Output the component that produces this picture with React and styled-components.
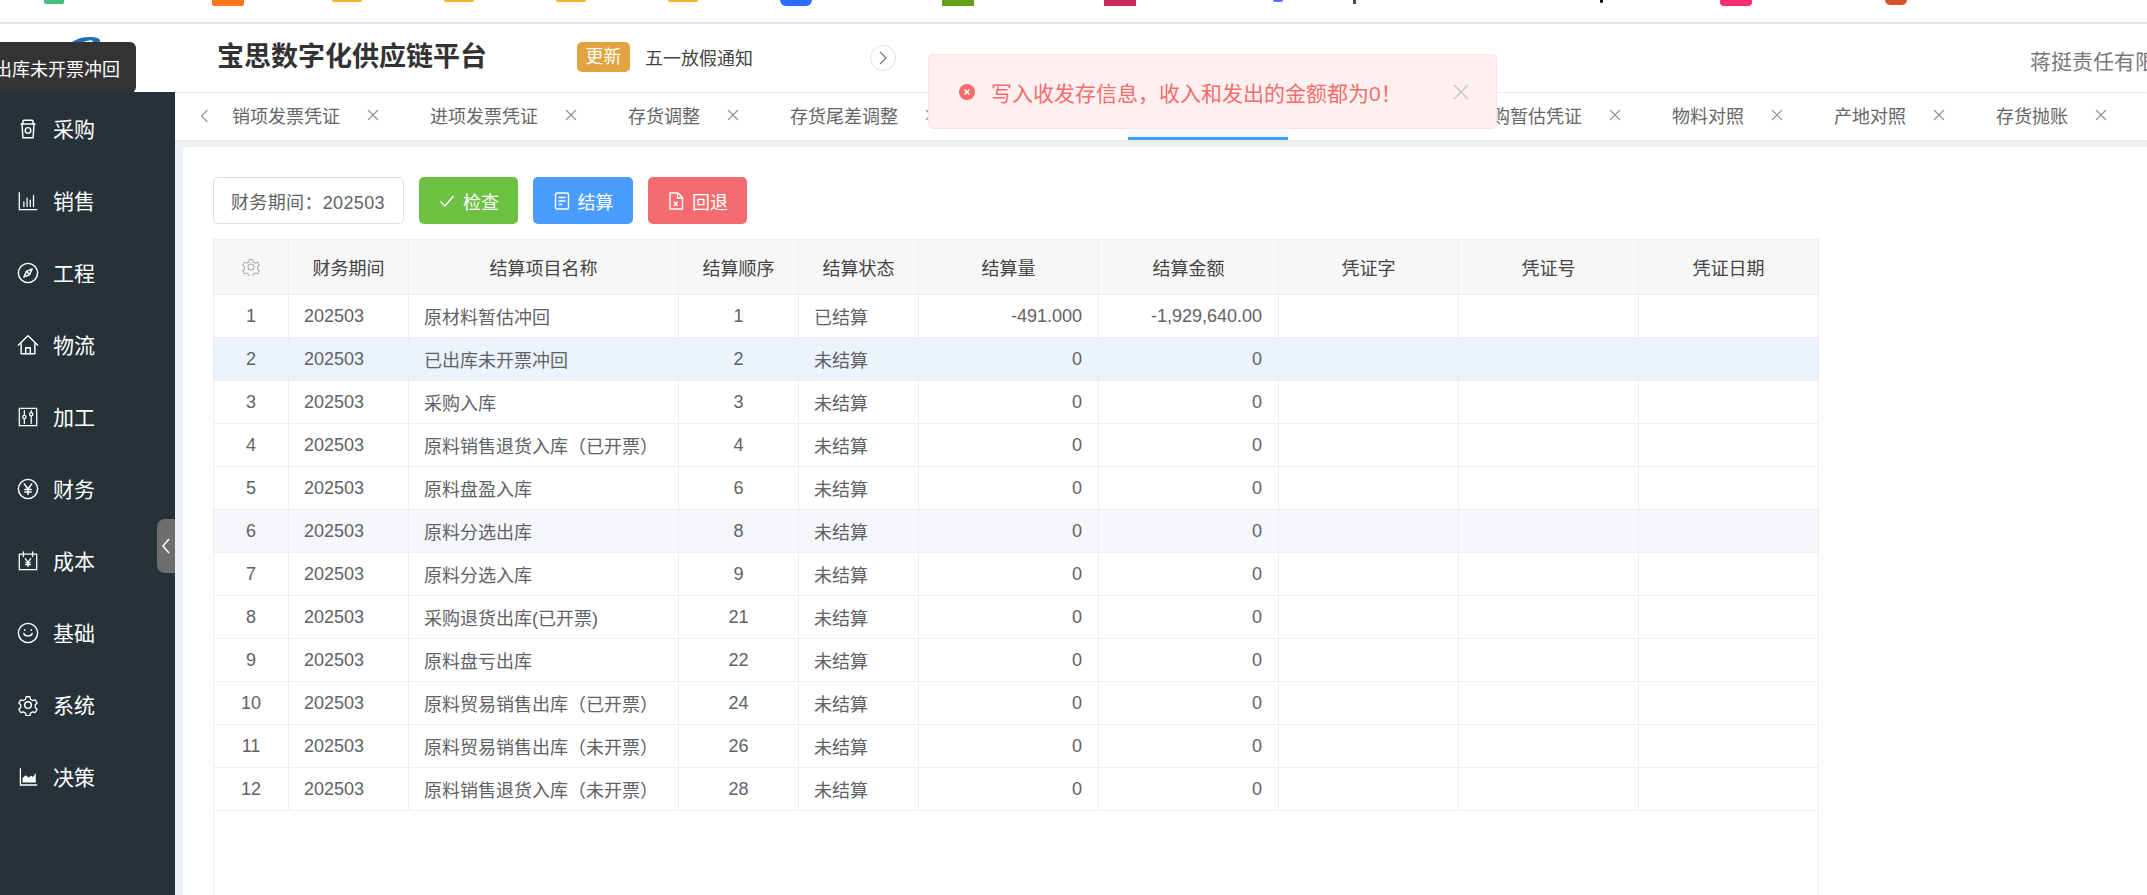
import React from 'react';
import styled, { createGlobalStyle } from 'styled-components';

const Global = createGlobalStyle`
  html, body { margin: 0; padding: 0; height: 100%; overflow: hidden; background: #fff; }
  #root { height: 100%; }
  * { box-sizing: border-box; }
  body { font-family: "Liberation Sans", "Noto Sans CJK SC", sans-serif; color: #606266; }
`;

const Page = styled.div`
  position: relative;
  width: 2147px;
  height: 895px;
  display: flex;
  flex-direction: column;
  overflow: hidden;
`;

/* browser bookmark bar, cropped at the top of the capture */
const BookmarkBar = styled.div`
  flex: 0 0 24px;
  display: flex;
  padding-left: 44px;
  background: #fff;
  border-bottom: 2px solid #e4e4e4;
  overflow: hidden;
`;
const Bookmark = styled.div`
  flex: 0 0 ${p => p.$w}px;
  display: flex;
  align-items: flex-start;
  gap: 11px;
  height: 22px;
  overflow: hidden;
`;
const BookmarkIcon = styled.span`
  flex: 0 0 ${p => p.$w}px;
  height: ${p => p.$h}px;
  background: ${p => p.$c};
  border-radius: 0 0 ${p => p.$r}px ${p => p.$r}px;
`;
const BookmarkLabel = styled.span`
  font-size: 18px;
  line-height: 18px;
  margin-top: -17px;
  color: #555;
  white-space: nowrap;
`;

const Header = styled.header`
  flex: 0 0 68px;
  display: flex;
  align-items: center;
  background: #fff;
  overflow: hidden;
`;
const LogoBox = styled.div`
  flex: 0 0 217px;
  align-self: stretch;
  padding: 9px 0 0 67px;
`;
const Title = styled.h1`
  margin: 0 0 2px;
  font-size: 27px;
  line-height: 34px;
  font-weight: 700;
  color: #333;
  white-space: nowrap;
`;
const Badge = styled.span`
  flex: 0 0 53px;
  height: 30px;
  margin: -2px 0 0 90px;
  border-radius: 5px;
  background: #e2a341;
  color: #fff;
  font-size: 18px;
  line-height: 30px;
  text-align: center;
`;
const Notice = styled.span`
  margin: -2px 0 0 15px;
  font-size: 18px;
  color: #444;
  white-space: nowrap;
`;
const RoundButton = styled.span`
  flex: 0 0 26px;
  height: 26px;
  margin-left: 117px;
  display: flex;
  align-items: center;
  justify-content: center;
  border: 1px solid #dcdfe6;
  border-radius: 50%;
  color: #777;
`;
const Company = styled.span`
  flex: 0 0 auto;
  margin: 4px 0 0 1134px;
  font-size: 21px;
  color: #777;
  white-space: nowrap;
`;

const Tooltip = styled.div`
  position: absolute;
  left: -40px;
  top: 42px;
  width: 176px;
  height: 51px;
  padding: 0 16px;
  display: flex;
  align-items: center;
  border-radius: 6px;
  background: #333;
  color: #fff;
  font-size: 18px;
  white-space: nowrap;
  z-index: 5;
`;

const Body = styled.div`
  flex: 1;
  display: flex;
  min-height: 0;
`;
const Sidebar = styled.aside`
  position: relative;
  flex: 0 0 175px;
  background: #263238;
`;
const MenuItem = styled.div`
  height: 72px;
  display: flex;
  align-items: center;
  padding-left: 17px;
  color: #fff;
  font-size: 21px;
`;
const MenuIcon = styled.span`
  flex: 0 0 22px;
  height: 22px;
  margin: 1px 14px 0 0;
  display: flex;
  align-items: center;
  justify-content: center;
`;
const CollapseHandle = styled.div`
  position: absolute;
  right: 0;
  top: 427px;
  width: 18px;
  height: 54px;
  display: flex;
  align-items: center;
  justify-content: center;
  border-radius: 8px 0 0 8px;
  background: #6e6e6e;
  color: #fff;
`;

const Main = styled.main`
  flex: 1;
  min-width: 0;
  display: flex;
  flex-direction: column;
  background: #eff2f5;
`;
const TabBar = styled.nav`
  flex: 0 0 48px;
  display: flex;
  border-top: 1px solid #eeeeee;
  background: #fff;
  box-shadow: 0 1px 4px rgba(0, 21, 41, 0.06);
  overflow: hidden;
`;
const TabArrow = styled.span`
  flex: 0 0 35px;
  padding: 0 0 2px 25px;
  display: flex;
  align-items: center;
  color: #999;
`;
const Tab = styled.div`
  flex: 0 0 auto;
  height: 47px;
  margin-right: 2px;
  padding-left: 22px;
  display: flex;
  align-items: center;
  font-size: 18px;
  color: #666;
  white-space: nowrap;
  background: ${p => (p.$active ? '#f4f8fe' : 'transparent')};
  border-bottom: 3px solid ${p => (p.$active ? '#409eff' : 'transparent')};
`;
const TabClose = styled.span`
  flex: 0 0 66px;
  display: flex;
  justify-content: center;
  color: #909399;
`;

const Panel = styled.section`
  flex: 1;
  min-height: 0;
  margin: 7px 0 0 8px;
  padding: 30px 0 0 30px;
  display: flex;
  flex-direction: column;
  background: #fff;
  border-radius: 4px 0 0 0;
  overflow: hidden;
`;
const Toolbar = styled.div`
  flex: 0 0 47px;
  display: flex;
  gap: 15px;
  margin-bottom: 15px;
`;
const PeriodBox = styled.div`
  flex: 0 0 191px;
  display: flex;
  align-items: center;
  padding-left: 17px;
  border: 1px solid #dcdfe6;
  border-radius: 5px;
  font-size: 18px;
  letter-spacing: 0.35px;
  color: #606266;
  white-space: nowrap;
`;
const ActionButton = styled.button`
  flex: 0 0 ${p => p.$w}px;
  display: flex;
  align-items: center;
  justify-content: center;
  gap: 8px;
  padding: 0 0 0 1px;
  border: 0;
  border-radius: 5px;
  background: ${p => p.$bg};
  color: #fff;
  font: inherit;
  font-size: 18px;
`;

const Table = styled.div`
  flex: 1;
  min-height: 0;
  width: 1606px;
  border: 1px solid #ebeef5;
  border-bottom: 0;
  font-size: 18px;
`;
const columns = '120px 270px 120px 120px 180px 180px 180px 180px 179px';
const HeadRow = styled.div`
  display: grid;
  grid-template-columns: 75px ${columns};
  height: 55px;
  background: #f7f7f7;
  border-bottom: 1px solid #ebeef5;
  color: #444;
`;
const HeadCell = styled.div`
  display: flex;
  align-items: center;
  justify-content: center;
  border-right: 1px solid #ebeef5;
  &:last-child { border-right: 0; }
`;
const GearWrap = styled.span`
  display: flex;
  color: #aaa;
`;
const TableBody = styled.div`
  display: flex;
`;
const FixedColumn = styled.div`
  flex: 0 0 75px;
  padding-top: 1px;
`;
const Rows = styled.div`
  flex: 1;
`;
const Row = styled.div`
  display: grid;
  grid-template-columns: ${columns};
  height: 43px;
  background: ${p => p.$bg};
`;
const IndexCell = styled.div`
  height: 43px;
  display: flex;
  align-items: center;
  justify-content: center;
  margin-top: ${p => (p.$first ? '-1px' : '0')};
  background: ${p => p.$bg};
  border-right: 1px solid #ebeef5;
  border-bottom: 1px solid #ebeef5;
`;
const Cell = styled.div`
  display: flex;
  align-items: center;
  justify-content: ${p => (p.$align === 'right' ? 'flex-end' : p.$align === 'center' ? 'center' : 'flex-start')};
  padding: 0 ${p => (p.$align === 'right' ? 16 : 15)}px 0 15px;
  border-right: 1px solid #ebeef5;
  border-bottom: 1px solid #ebeef5;
  white-space: nowrap;
  &:last-child { border-right: 0; }
`;

const Message = styled.div`
  position: absolute;
  left: 928px;
  top: 54px;
  width: 569px;
  height: 75px;
  padding: 0 25px 0 30px;
  display: flex;
  align-items: center;
  border: 1px solid #fde2e2;
  border-radius: 5px;
  background: #fef0f0;
  color: #f56c6c;
  font-size: 21px;
  z-index: 6;
`;
const MessageText = styled.span`
  flex: 1;
  margin-left: 16px;
  white-space: nowrap;
`;
const MessageClose = styled.span`
  display: flex;
  color: #c0c4cc;
`;

const Stroke = ({ w = 22, h = 22, vb = '0 0 24 24', sw = 1.6, children }) => (
  <svg width={w} height={h} viewBox={vb} fill="none" stroke="currentColor" strokeWidth={sw} strokeLinecap="round" strokeLinejoin="round">
    {children}
  </svg>
);

const gearPath = 'M9.700 2h4.600l.7 3 2.800 1.600 3-.9 2.300 4-2.300 2.100v3.200l2.300 2.100-2.300 4-3-.9-2.800 1.600-.7 3H9.700l-.7-3-2.800-1.600-3 .9-2.300-4 2.300-2.100v-3.200L.9 9.700l2.300-4 3 .9L9 5z';

const icons = {
  cup: (
    <Stroke>
      <path d="M5.500 6.500l.9 15h11.200l.9-15" />
      <path d="M4.500 6.500h15" />
      <path d="M6.500 6.500V3.500a1 1 0 0 1 1-1h9a1 1 0 0 1 1 1v3" />
      <circle cx="12" cy="13.500" r="3" />
    </Stroke>
  ),
  bars: (
    <Stroke sw={1.4}>
      <path d="M2.500 3v18.500h19" />
      <path d="M7.500 18V13M11 18V9M14.500 18V11M18 18V6" />
    </Stroke>
  ),
  compass: (
    <Stroke>
      <circle cx="12" cy="12" r="10.500" />
      <path d="M16.500 7.500l-6.200 2.800-2.800 6.200 6.200-2.800z" />
      <path d="M10.300 10.300l3.400 3.400" />
    </Stroke>
  ),
  house: (
    <Stroke>
      <path d="M1.500 12L12 2l10.500 10" />
      <path d="M4.500 10v11.500h15V10" />
      <path d="M9.500 21.500V15h5v6.500" />
    </Stroke>
  ),
  sliders: (
    <Stroke sw={1.4}>
      <rect x="2.500" y="2.500" width="19" height="19" />
      <path d="M8 5v5M8 14v5M15.500 5v2M15.500 11v8" />
      <circle cx="8" cy="12" r="1.800" />
      <circle cx="15.500" cy="9" r="1.800" />
    </Stroke>
  ),
  yen: (
    <Stroke>
      <circle cx="12" cy="12" r="10.500" />
      <path d="M8 6.500l4 5.500 4-5.500M12 12v6M8.500 12.500h7M8.500 15.200h7" />
    </Stroke>
  ),
  date: (
    <Stroke sw={1.4}>
      <path d="M2.500 4.500h19v17h-19z" />
      <path d="M7 2v5M17 2v5" />
      <path d="M9 9.500l3 4 3-4M12 13.500V18M9.500 14h5M9.500 16h5" />
    </Stroke>
  ),
  smile: (
    <Stroke>
      <circle cx="12" cy="12" r="10.500" />
      <path d="M7.500 12.500c1 3.500 8 3.500 9 0" />
      <path d="M8.500 8.500v.5M15.500 8.500v.5" />
    </Stroke>
  ),
  gear: (
    <Stroke>
      <path d={gearPath} transform="translate(1.200 1.200) scale(.9)" />
      <circle cx="12" cy="12" r="3.600" />
    </Stroke>
  ),
  area: (
    <svg width="22" height="22" viewBox="0 0 24 24" fill="currentColor">
      <path d="M3 2.500h1.400V20H22v1.500H3z" />
      <path d="M6 18v-5l3.500-3 3 2.500 3-2 2 1.500 3-4.500V18z" />
    </svg>
  ),
};

const menu = [
  ['cup', '采购'], ['bars', '销售'], ['compass', '工程'], ['house', '物流'], ['sliders', '加工'],
  ['yen', '财务'], ['date', '成本'], ['smile', '基础'], ['gear', '系统'], ['area', '决策'],
];

const bookmarks = [
  { w: 168, iw: 20, ih: 4, c: '#45c07a', r: 2, label: '宝钢集团采购' },
  { w: 120, iw: 32, ih: 6, c: '#ff7518', r: 2, label: '' },
  { w: 112, iw: 30, ih: 2, c: '#f5b325', r: 2, label: '钉钉办公' },
  { w: 112, iw: 30, ih: 2, c: '#f5b325', r: 2, label: '企业邮箱' },
  { w: 112, iw: 30, ih: 2, c: '#f5b325', r: 2, label: '云盘系统' },
  { w: 112, iw: 30, ih: 2, c: '#f5b325', r: 2, label: '知识中心' },
  { w: 162, iw: 32, ih: 6, c: '#2a6cff', r: 8, label: '飞书文档平台' },
  { w: 162, iw: 32, ih: 6, c: '#65a117', r: 0, label: '财务共享平台' },
  { w: 169, iw: 32, ih: 6, c: '#c92c58', r: 0, label: '税务申报系统' },
  { w: 80, iw: 10, ih: 2, c: '#5c6cff', r: 5, label: '' },
  { w: 102, iw: 3, ih: 4, c: '#4a4a4a', r: 0, label: '' },
  { w: 145, iw: 0, ih: 0, c: 'transparent', r: 0, label: '协同办公平台' },
  { w: 120, iw: 3, ih: 3, c: '#111', r: 2, label: '商旅出行' },
  { w: 165, iw: 32, ih: 6, c: '#ff2d6e', r: 4, label: '' },
  { w: 200, iw: 22, ih: 5, c: '#d8552a', r: 11, label: '政务服务' },
];

const tabs = [
  '销项发票凭证', '进项发票凭证', '存货调整', '存货尾差调整', '成本计算',
  '存货结转', '暂估冲回', '采购暂估凭证', '物料对照', '产地对照', '存货抛账',
];

const X = ({ size = 14, sw = 1.2 }) => (
  <svg width={size} height={size} viewBox="0 0 14 14" fill="none" stroke="currentColor" strokeWidth={sw}>
    <path d="M2 2l10 10M12 2L2 12" />
  </svg>
);

const rows = [
  [1, '原材料暂估冲回', 1, '已结算', '-491.000', '-1,929,640.00'],
  [2, '已出库未开票冲回', 2, '未结算', '0', '0'],
  [3, '采购入库', 3, '未结算', '0', '0'],
  [4, '原料销售退货入库（已开票）', 4, '未结算', '0', '0'],
  [5, '原料盘盈入库', 6, '未结算', '0', '0'],
  [6, '原料分选出库', 8, '未结算', '0', '0'],
  [7, '原料分选入库', 9, '未结算', '0', '0'],
  [8, '采购退货出库(已开票)', 21, '未结算', '0', '0'],
  [9, '原料盘亏出库', 22, '未结算', '0', '0'],
  [10, '原料贸易销售出库（已开票）', 24, '未结算', '0', '0'],
  [11, '原料贸易销售出库（未开票）', 26, '未结算', '0', '0'],
  [12, '原料销售退货入库（未开票）', 28, '未结算', '0', '0'],
];

const rowBg = n => (n === 2 ? '#ecf3fd' : n === 6 ? '#f5f7fb' : '#fff');

const heads = ['财务期间', '结算项目名称', '结算顺序', '结算状态', '结算量', '结算金额', '凭证字', '凭证号', '凭证日期'];

export default function App() {
  return (
    <Page>
      <Global />
      <BookmarkBar>
        {bookmarks.map((b, i) => (
          <Bookmark key={i} $w={b.w}>
            <BookmarkIcon $w={b.iw} $h={b.ih} $c={b.c} $r={b.r} />
            {b.label && <BookmarkLabel>{b.label}</BookmarkLabel>}
          </Bookmark>
        ))}
      </BookmarkBar>

      <Header>
        <LogoBox>
          <svg width="33" height="10" viewBox="0 0 33 10">
            <path d="M0 10C5 3 14 0 22 0c7 0 11 1 11 4 0 3-5 5-11 6h-4c4-1 8-3 8-5 0-1.500-2-2-4-1.500C16 4.500 11 7 8 10z" fill="#1f6fb8" />
          </svg>
        </LogoBox>
        <Title>宝思数字化供应链平台</Title>
        <Badge>更新</Badge>
        <Notice>五一放假通知</Notice>
        <RoundButton>
          <svg width="10" height="16" viewBox="0 0 10 16" fill="none" stroke="currentColor" strokeWidth="1.2">
            <path d="M2 2l6 6-6 6" />
          </svg>
        </RoundButton>
        <Company>蒋挺责任有限公司</Company>
      </Header>

      <Tooltip>已出库未开票冲回</Tooltip>

      <Body>
        <Sidebar>
          {menu.map(([icon, label]) => (
            <MenuItem key={label}>
              <MenuIcon>{icons[icon]}</MenuIcon>
              {label}
            </MenuItem>
          ))}
          <CollapseHandle>
            <svg width="10" height="18" viewBox="0 0 10 18" fill="none" stroke="currentColor" strokeWidth="1.6">
              <path d="M8 2L2 9l6 7" />
            </svg>
          </CollapseHandle>
        </Sidebar>

        <Main>
          <TabBar>
            <TabArrow>
              <svg width="9" height="14" viewBox="0 0 9 14" fill="none" stroke="currentColor" strokeWidth="1.2">
                <path d="M7.500 1L1.500 7l6 6" />
              </svg>
            </TabArrow>
            {tabs.map((t, i) => (
              <Tab key={t} $active={i === 5}>
                {t}
                <TabClose><X /></TabClose>
              </Tab>
            ))}
          </TabBar>

          <Panel>
            <Toolbar>
              <PeriodBox>财务期间：202503</PeriodBox>
              <ActionButton $w={99} $bg="#6cc142">
                <svg width="16" height="16" viewBox="0 0 16 16" fill="none" stroke="currentColor" strokeWidth="1.4">
                  <path d="M1.500 8.500l4.500 4.500 8.500-10" />
                </svg>
                检查
              </ActionButton>
              <ActionButton $w={100} $bg="#4a9cff">
                <svg width="16" height="18" viewBox="0 0 16 18" fill="none" stroke="currentColor" strokeWidth="1.4">
                  <rect x="1.500" y="1" width="13" height="16" rx="1.500" />
                  <path d="M4.500 5.500h7M4.500 9h7M4.500 12.500h4" />
                </svg>
                结算
              </ActionButton>
              <ActionButton $w={99} $bg="#f56c70">
                <svg width="16" height="18" viewBox="0 0 16 18" fill="none" stroke="currentColor" strokeWidth="1.4">
                  <path d="M2 1h8l4.500 4.500V17H2z" />
                  <path d="M9.500 1v5h5" />
                  <path d="M5.800 9.500l3.800 4.500M9.600 9.500l-3.800 4.500" />
                </svg>
                回退
              </ActionButton>
            </Toolbar>

            <Table>
              <HeadRow>
                <HeadCell>
                  <GearWrap>
                    <Stroke w={18} h={18} sw={1.4}>
                      <path d={gearPath} />
                      <circle cx="12" cy="12" r="4" />
                    </Stroke>
                  </GearWrap>
                </HeadCell>
                {heads.map(h => <HeadCell key={h}>{h}</HeadCell>)}
              </HeadRow>
              <TableBody>
                <FixedColumn>
                  {rows.map(([n], i) => (
                    <IndexCell key={n} $bg={rowBg(n)} $first={i === 0}>{n}</IndexCell>
                  ))}
                </FixedColumn>
                <Rows>
                  {rows.map(([n, name, order, status, qty, amount]) => (
                    <Row key={n} $bg={rowBg(n)}>
                      <Cell>202503</Cell>
                      <Cell>{name}</Cell>
                      <Cell $align="center">{order}</Cell>
                      <Cell>{status}</Cell>
                      <Cell $align="right">{qty}</Cell>
                      <Cell $align="right">{amount}</Cell>
                      <Cell />
                      <Cell />
                      <Cell />
                    </Row>
                  ))}
                </Rows>
              </TableBody>
            </Table>
          </Panel>
        </Main>
      </Body>

      <Message>
        <svg width="16" height="16" viewBox="0 0 16 16">
          <circle cx="8" cy="8" r="8" fill="#f56c6c" />
          <path d="M5.500 5.500l5 5M10.500 5.500l-5 5" stroke="#fff" strokeWidth="1.500" />
        </svg>
        <MessageText>写入收发存信息，收入和发出的金额都为0！</MessageText>
        <MessageClose><X size={20} sw={1} /></MessageClose>
      </Message>
    </Page>
  );
}
